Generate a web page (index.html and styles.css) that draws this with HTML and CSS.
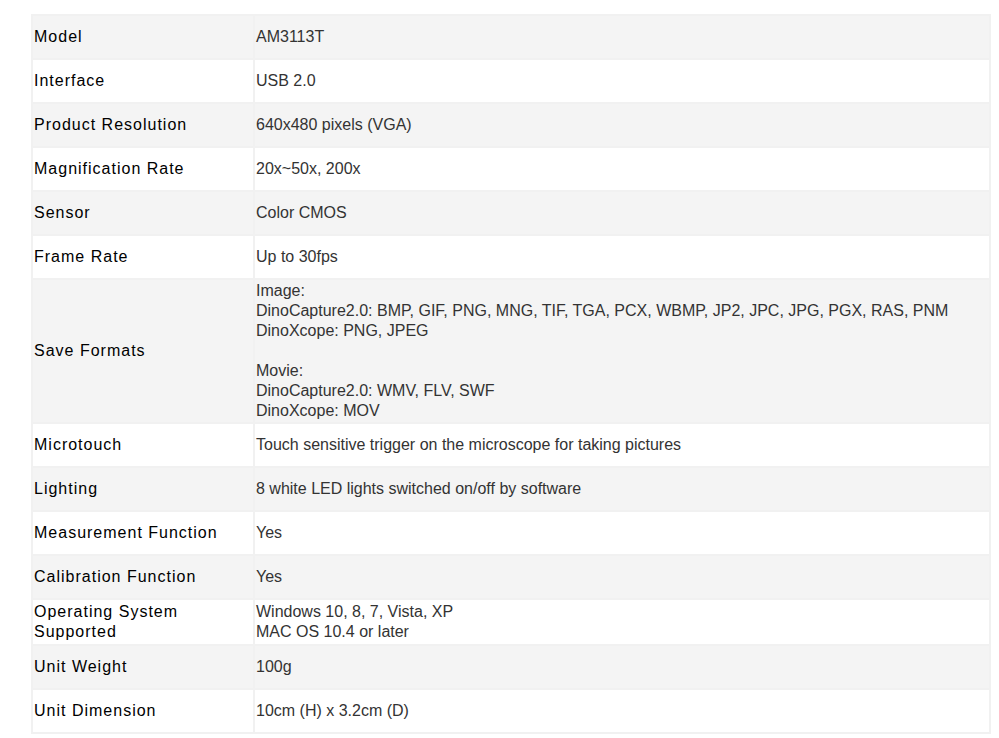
FILE: index.html
```html
<!DOCTYPE html>
<html>
<head>
<meta charset="utf-8">
<link rel="stylesheet" href="styles.css">
</head>
<body>
<div class="wrap">
<table class="specs">
<colgroup><col class="c-label"><col class="c-value"></colgroup>
<tbody>
<tr><td class="label">Model</td><td class="value">AM3113T</td></tr>
<tr><td class="label">Interface</td><td class="value">USB 2.0</td></tr>
<tr><td class="label">Product Resolution</td><td class="value">640x480 pixels (VGA)</td></tr>
<tr><td class="label">Magnification Rate</td><td class="value">20x~50x, 200x</td></tr>
<tr><td class="label">Sensor</td><td class="value">Color CMOS</td></tr>
<tr><td class="label">Frame Rate</td><td class="value">Up to 30fps</td></tr>
<tr><td class="label">Save Formats</td><td class="value">Image:<br>DinoCapture2.0: BMP, GIF, PNG, MNG, TIF, TGA, PCX, WBMP, JP2, JPC, JPG, PGX, RAS, PNM<br>DinoXcope: PNG, JPEG<br><br>Movie:<br>DinoCapture2.0: WMV, FLV, SWF<br>DinoXcope: MOV</td></tr>
<tr><td class="label">Microtouch</td><td class="value">Touch sensitive trigger on the microscope for taking pictures</td></tr>
<tr><td class="label">Lighting</td><td class="value">8 white LED lights switched on/off by software</td></tr>
<tr><td class="label">Measurement Function</td><td class="value">Yes</td></tr>
<tr><td class="label">Calibration Function</td><td class="value">Yes</td></tr>
<tr class="tall"><td class="label">Operating System Supported</td><td class="value">Windows 10, 8, 7, Vista, XP<br>MAC OS 10.4 or later</td></tr>
<tr><td class="label">Unit Weight</td><td class="value">100g</td></tr>
<tr><td class="label">Unit Dimension</td><td class="value">10cm (H) x 3.2cm (D)</td></tr>
</tbody>
</table>
</div>
</body>
</html>
```
FILE: styles.css
```css
html, body {
  margin: 0;
  padding: 0;
  background: #ffffff;
}
.wrap {
  padding: 14px 0 0 31px;
}
.specs {
  width: 960px;
  table-layout: fixed;
  border-collapse: separate;
  border-spacing: 2px;
  background: #f1f1f1;
  font-family: "Liberation Sans", Arial, sans-serif;
  font-size: 16px;
  line-height: 20px;
}
.c-label { width: 220px; }
.c-value { width: 734px; }
.specs td {
  height: 40px;
  padding: 1px;
  vertical-align: middle;
  background: #ffffff;
}
.specs tr.tall td {
  padding: 2px 1px;
}
.specs tr:nth-child(odd) td {
  background: #f4f4f4;
}
.label {
  color: #000000;
  letter-spacing: 1px;
}
.value {
  color: #333333;
}
```
